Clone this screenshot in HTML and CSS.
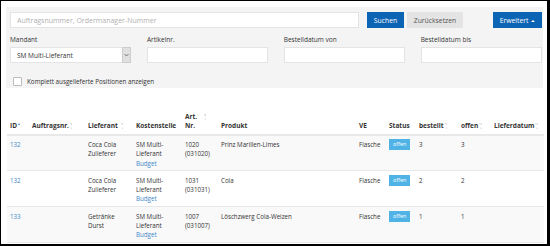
FILE: index.html
```html
<!DOCTYPE html>
<html lang="de">
<head>
  <meta charset="UTF-8" />
  <meta name="viewport" content="width=device-width, initial-scale=1" />
  <title>Bestellpositionen</title>
  <link rel="stylesheet" href="styles.css">
</head>
<body>

  <div class="frame">

    <div class="filter">
      <div class="search-row">
        <input type="text" class="search" placeholder="Auftragsnummer, Ordermanager-Nummer" />
        <button type="button" class="btn btn-primary btn-search">Suchen</button>
        <button type="button" class="btn btn-default">Zurücksetzen</button>
        <button type="button" class="btn btn-primary btn-right">Erweitert <span class="caret-up"></span></button>
      </div>

      <div class="fields">
        <div class="field">
          <label>Mandant</label>
          <div class="select">
            <span>SM Multi-Lieferant</span>
            <span class="select-arrow">
              <svg width="5" height="4" viewBox="0 0 5 4"><path d="M0.5 1 L2.5 3 L4.5 1" fill="none" stroke="#777" stroke-width="1"/></svg>
            </span>
          </div>
        </div>
        <div class="field">
          <label>Artikelnr.</label>
          <input type="text" />
        </div>
        <div class="field">
          <label>Bestelldatum von</label>
          <input type="text" />
        </div>
        <div class="field">
          <label>Bestelldatum bis</label>
          <input type="text" />
        </div>
      </div>

      <div class="check-row">
        <span class="checkbox"></span>
        <span>Komplett ausgelieferte Positionen anzeigen</span>
      </div>
    </div>

    <table class="orders">
      <thead>
        <tr>
          <th class="c-id">ID<span class="sorted"></span></th>
          <th class="c-auftrag">Auftragsnr.<span class="sort"></span></th>
          <th class="c-lief">Lieferant <span class="sort"></span></th>
          <th class="c-kost">Kostenstelle</th>
          <th class="c-art">Art. <span class="sort sort-art"></span><br>Nr.</th>
          <th class="c-prod">Produkt</th>
          <th class="c-ve">VE</th>
          <th class="c-status">Status</th>
          <th class="c-best">bestellt<span class="sort"></span></th>
          <th class="c-offen">offen<span class="sort"></span></th>
          <th class="c-datum">Lieferdatum<span class="sort"></span></th>
        </tr>
      </thead>
      <tbody>
        <tr>
          <td><a href="#">132</a></td>
          <td></td>
          <td>Coca Cola<br>Zulieferer</td>
          <td>SM Multi-<br>Lieferant<br><a href="#">Budget</a></td>
          <td>1020<br>(031020)</td>
          <td>Prinz Marillen-Limes</td>
          <td>Flasche</td>
          <td><span class="badge">offen</span></td>
          <td>3</td>
          <td>3</td>
          <td></td>
        </tr>
        <tr>
          <td><a href="#">132</a></td>
          <td></td>
          <td>Coca Cola<br>Zulieferer</td>
          <td>SM Multi-<br>Lieferant<br><a href="#">Budget</a></td>
          <td>1031<br>(031031)</td>
          <td>Cola</td>
          <td>Flasche</td>
          <td><span class="badge">offen</span></td>
          <td>2</td>
          <td>2</td>
          <td></td>
        </tr>
        <tr>
          <td><a href="#">133</a></td>
          <td></td>
          <td>Getränke<br>Durst</td>
          <td>SM Multi-<br>Lieferant<br><a href="#">Budget</a></td>
          <td>1007<br>(031007)</td>
          <td>Löschzwerg Cola-Weizen</td>
          <td>Flasche</td>
          <td><span class="badge">offen</span></td>
          <td>1</td>
          <td>1</td>
          <td></td>
        </tr>
      </tbody>
    </table>

  </div>

</body>
</html>
```

FILE: styles.css
```css
* {
  box-sizing: border-box;
}

html, body {
  margin: 0;
  padding: 0;
  background: #fff;
}

body {
  font-family: 'Open Sans', sans-serif;
  color: #333;
  font-size: 6.5px;
}

.frame {
  width: 550px;
  height: 246px;
  border-top: 1px solid #000;
  border-left: 1px solid #000;
  border-right: 3px solid #000;
  border-bottom: 2px solid #000;
  padding: 6px 4px 0 5px;
  overflow: hidden;
}

.filter {
  background: #f4f4f4;
  padding: 5px 1px 2px 4px;
}

.search-row {
  display: flex;
  align-items: center;
  height: 16px;
}

input {
  font-family: 'Open Sans', sans-serif;
  border: 1px solid #e4e4e4;
  background: #fff;
  height: 16px;
  padding: 0 6px;
  margin: 0;
  border-radius: 0;
  outline: none;
}

.search {
  width: 349px;
  font-size: 7px;
}

.search::placeholder {
  color: #b0b0b0;
}

.btn {
  font-family: 'Open Sans', sans-serif;
  font-size: 6.8px;
  height: 16px;
  padding: 0 5px;
  border: none;
  border-radius: 0;
  margin: 0;
}

.btn-primary {
  background: #0c64b5;
  color: #fff;
  margin-left: 8px;
}

.btn-search {
  width: 37px;
}

.btn-default {
  background: #e4e4e4;
  color: #555;
  margin-left: 3px;
  width: 56px;
}

.btn-right {
  margin-left: auto;
  width: 49px;
}

.caret-up {
  display: inline-block;
  width: 0;
  height: 0;
  border-left: 2px solid transparent;
  border-right: 2px solid transparent;
  border-bottom: 2.5px solid #fff;
  vertical-align: 1px;
  margin-left: 1px;
}

.fields {
  display: grid;
  grid-template-columns: repeat(4, 1fr);
  column-gap: 15.5px;
  margin-top: 7px;
}

.field label {
  display: block;
  line-height: 10px;
  height: 10px;
  margin-bottom: 2px;
  font-size: 6.5px;
  color: #333;
}

.field input {
  width: 100%;
  display: block;
}

.select {
  display: flex;
  align-items: center;
  height: 16px;
  background: #fff;
  border: 1px solid #e4e4e4;
  padding-left: 6px;
  font-size: 6.5px;
}

.select span:first-child {
  flex: 1;
}

.select-arrow {
  width: 9px;
  height: 16px;
  margin: -1px -1px -1px 0;
  background: #e0e0e0;
  border: 1px solid #ccc;
  display: flex;
  align-items: center;
  justify-content: center;
}

.check-row {
  display: flex;
  align-items: center;
  gap: 5px;
  margin-top: 13px;
  height: 10px;
  padding-left: 3px;
  font-size: 6.3px;
}

.checkbox {
  width: 9px;
  height: 9px;
  background: #fff;
  border: 1px solid #bbb;
  border-radius: 1px;
}

.orders {
  width: 537px;
  margin-top: 21px;
  margin-left: 1px;
  border-collapse: collapse;
  table-layout: fixed;
}

.orders th, .orders td {
  text-align: left;
  vertical-align: top;
  line-height: 9.3px;
}

.orders th {
  font-weight: 700;
  font-size: 6.5px;
  vertical-align: bottom;
  padding: 3px 3px 3px;
  border-bottom: 2px solid #e8e8e8;
  white-space: nowrap;
}

.orders td {
  font-size: 6.2px;
  padding: 4.5px 3px 2.4px;
  border-top: 1px solid #e8e8e8;
  height: 34.8px;
}

.orders tbody tr:nth-child(odd) {
  background: #f9f9f9;
}

.orders tbody tr:last-child td {
  border-bottom: 1px solid #e8e8e8;
}

.c-id { width: 22px; }
.c-auftrag { width: 56px; }
.c-lief { width: 48px; }
.c-kost { width: 49px; }
.c-art { width: 36px; }
.c-prod { width: 138px; }
.c-ve { width: 30px; }
.c-status { width: 30px; }
.c-best { width: 42px; }
.c-offen { width: 33px; }
.c-datum { width: 53px; }

.sorted {
  display: inline-block;
  width: 0;
  height: 0;
  border-left: 1.5px solid transparent;
  border-right: 1.5px solid transparent;
  border-bottom: 2.5px solid #3a87c8;
  margin-left: 1px;
  vertical-align: 3px;
}

.sort {
  display: inline-block;
  width: 3px;
  height: 6px;
  margin-left: 1px;
  vertical-align: -1px;
  background:
    linear-gradient(to top right, transparent 50%, #ddd 50%) 0 0 / 1.5px 2.5px no-repeat,
    linear-gradient(to top left, transparent 50%, #ddd 50%) 1.5px 0 / 1.5px 2.5px no-repeat,
    linear-gradient(to bottom right, transparent 50%, #ddd 50%) 0 3.5px / 1.5px 2.5px no-repeat,
    linear-gradient(to bottom left, transparent 50%, #ddd 50%) 1.5px 3.5px / 1.5px 2.5px no-repeat;
}

.sort-art {
  margin-left: 5px;
}

a {
  color: #3a87c8;
  text-decoration: none;
}

.badge {
  display: inline-block;
  background: #4fb3e6;
  color: #fff;
  font-size: 5.5px;
  line-height: 11px;
  height: 11px;
  padding: 0 4px;
  vertical-align: top;
  margin-top: -1px;
}
```
